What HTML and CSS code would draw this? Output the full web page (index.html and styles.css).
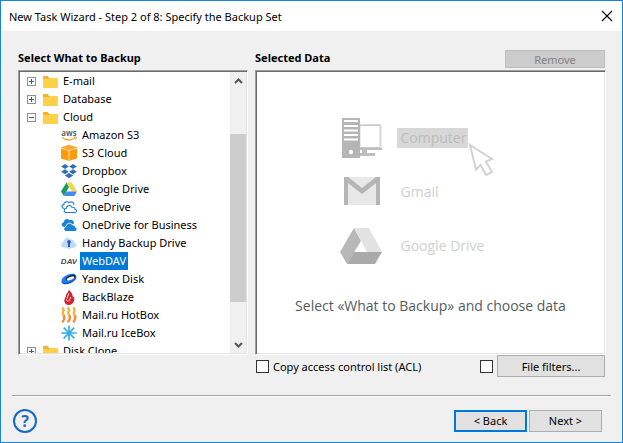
FILE: index.html
```html
<!DOCTYPE html>
<html lang="en">
  <head>
    <meta charset="UTF-8" />
    <meta name="viewport" content="width=device-width, initial-scale=1.0" />
    <title>New Task Wizard</title>
    <link rel="stylesheet" href="styles.css">
  </head>
  <body>
    <div class="window">
      <header class="title-bar">
        <h1>New Task Wizard - Step 2 of 8: Specify the Backup Set</h1>
        <button type="button" class="close-btn" aria-label="Close">
          <svg width="12" height="12" viewBox="0 0 12 12"><path d="M1 1l10 10M11 1L1 11" stroke="#000" stroke-width="1.1" fill="none"/></svg>
        </button>
      </header>

      <main class="content">
        <section class="column">
          <div class="column-header">
            <h2>Select What to Backup</h2>
          </div>
          <div class="panel source-panel">
            <ul class="tree">
              <li class="node">
                <button type="button" class="toggle closed" aria-label="Expand E-mail"></button>
                <svg class="folder" viewBox="0 0 15 13"><path d="M0 1h5l1 2h9v10H0z" fill="#ffb02e"/><path d="M0 4h6l1-1h8v10H0z" fill="#ffd04a"/></svg>
                <span class="label">E-mail</span>
              </li>
              <li class="node">
                <button type="button" class="toggle closed" aria-label="Expand Database"></button>
                <svg class="folder" viewBox="0 0 15 13"><path d="M0 1h5l1 2h9v10H0z" fill="#ffb02e"/><path d="M0 4h6l1-1h8v10H0z" fill="#ffd04a"/></svg>
                <span class="label">Database</span>
              </li>
              <li class="node">
                <button type="button" class="toggle" aria-label="Collapse Cloud"></button>
                <svg class="folder" viewBox="0 0 15 13"><path d="M0 1h5l1 2h9v10H0z" fill="#ffb02e"/><path d="M0 4h6l1-1h8v10H0z" fill="#ffd04a"/></svg>
                <span class="label">Cloud</span>
              </li>
              <li>
                <ul class="branch">
                  <li class="node">
                    <svg class="icon" viewBox="0 0 16 16">
                      <text x="8" y="9" class="aws-text">aws</text>
                      <path d="M1 10.500c4 3 9 3 13 .5" stroke="#f5a030" stroke-width="1.300" fill="none"/>
                      <path d="M12.500 10h3l-1 2.500" stroke="#f5a030" fill="none"/>
                    </svg>
                    <span class="label">Amazon S3</span>
                  </li>
                  <li class="node">
                    <svg class="icon" viewBox="0 0 16 16">
                      <path d="M8 0l8 2.500v11L8 16l-8-2.500v-11z" fill="#ff9a0a"/>
                      <path d="M0 2.500L8 0l8 2.500L8 5z" fill="#ffa726"/>
                      <path d="M0 3.200l8 2.300 8-2.300M8 5.500V16" stroke="#fff0d8" stroke-width=".8" fill="none"/>
                    </svg>
                    <span class="label">S3 Cloud</span>
                  </li>
                  <li class="node">
                    <svg class="icon" viewBox="0 0 16 16">
                      <path d="M4 1l3.800 2.500L4 6 .2 3.500zM12 1l3.800 2.500L12 6 8.200 3.500zM4 6.300l3.800 2.500L4 11.300.2 8.800zM12 6.300l3.800 2.500-3.800 2.500-3.800-2.500zM8 10l4.200 2.600L8 15.200l-4.200-2.600z" fill="#2e6fb8"/>
                    </svg>
                    <span class="label">Dropbox</span>
                  </li>
                  <li class="node">
                    <svg class="icon" viewBox="0 0 16 16">
                      <path d="M5.500 1.500L8 6 2.800 15 0 10.500z" fill="#11a05c"/>
                      <path d="M5.500 1.500h5L16 10.500h-5z" fill="#ffcf44"/>
                      <path d="M5.300 10.500H16L13.300 15H2.800z" fill="#4688f4"/>
                    </svg>
                    <span class="label">Google Drive</span>
                  </li>
                  <li class="node">
                    <svg class="icon" viewBox="0 0 16 16">
                      <path d="M3.500 9.500C.5 9.500 0 6 2.700 5.600 3 2.800 6 1.800 8 3.700c2-1.800 5-.6 5 2.300" fill="none" stroke="#1b82d6" stroke-width="1.100"/>
                      <path d="M5.500 13.500c-3 0-3-4-.3-4.300C5.700 6.300 9.600 5.500 11 8.300c2-.4 3 .6 2.900 2 2.200.2 2 3.200 0 3.200z" fill="#fff" stroke="#1b82d6" stroke-width="1.100"/>
                    </svg>
                    <span class="label">OneDrive</span>
                  </li>
                  <li class="node">
                    <svg class="icon" viewBox="0 0 16 16">
                      <path d="M3 10C0 9.500 0 6 2.500 5.600 3 2 6.500 1 8.500 3.200c2-1 4.500.3 4.500 3.300L9 9z" fill="#1b82d6"/>
                      <path d="M5.500 14.500c-3.500 0-3.500-4.500-.5-5C5.500 6 9.800 5 11.500 8c2-.3 3 .7 2.900 2.200 2.300.5 2 4.300-.4 4.300z" fill="#1b82d6" stroke="#fff" stroke-width=".9"/>
                    </svg>
                    <span class="label">OneDrive for Business</span>
                  </li>
                  <li class="node">
                    <svg class="icon" viewBox="0 0 16 16">
                      <path d="M4 12.500C-.5 13-1 7.500 2.600 7 3 2.500 7.500 1.500 9.500 4.500c2.500-.3 3.700 1 3.500 3 3.500.5 3 5-.3 5L8 14z" fill="#b9dcfb"/>
                      <path d="M8 5a2 2 0 0 1 1 3.600V12H7V8.600A2 2 0 0 1 8 5z" fill="#3b4fb5"/>
                    </svg>
                    <span class="label">Handy Backup Drive</span>
                  </li>
                  <li class="node selected">
                    <svg class="icon" viewBox="0 0 16 16"><text x="8" y="11" class="dav-text">DAV</text></svg>
                    <span class="label">WebDAV</span>
                  </li>
                  <li class="node">
                    <svg class="icon" viewBox="0 0 16 16">
                      <ellipse cx="8" cy="8.600" rx="7.800" ry="3.900" transform="rotate(-22 8 8.600)" fill="#0b4fb0"/>
                      <ellipse cx="8" cy="7.300" rx="7.800" ry="3.900" transform="rotate(-22 8 7.300)" fill="#1a7cf2"/>
                      <ellipse cx="9.500" cy="6.800" rx="5" ry="2.300" transform="rotate(-22 9.500 6.800)" fill="#111"/>
                      <ellipse cx="9.500" cy="7.500" rx="4" ry="1.500" transform="rotate(-22 9.500 7.500)" fill="#f2f8ff"/>
                    </svg>
                    <span class="label">Yandex Disk</span>
                  </li>
                  <li class="node">
                    <svg class="icon" viewBox="0 0 16 16">
                      <path d="M8 0c.3 2.500 4 3.700 3.500 7.300C13.300 8 13.700 10 13 12c-.9 2.500-3 4-5.200 4C5 16 3.200 14 3.300 11.500c0-2 1.500-3 1.700-5C5.200 4.200 8 3 8 0z" fill="#d9202e"/>
                      <path d="M7.500 4.500c.5 2-1.800 3-1.300 5M9.500 8c.5 1.800-1.700 2.500-1.500 4.500M5.500 10.500c0 1 .7 1.700 1.500 1.800" stroke="#fff" stroke-width=".9" fill="none"/>
                    </svg>
                    <span class="label">BackBlaze</span>
                  </li>
                  <li class="node">
                    <svg class="icon" viewBox="0 0 16 16" fill="none" stroke-width="2.400">
                      <path d="M1 .5c4 2.500-1 4.500 1.500 7.500M6.500 .5c4 2.500-1 4.500 1.500 7.500M12 .5c4 2.500-1 4.500 1.500 7.500" stroke="#fbb03b"/>
                      <path d="M2.500 8c2.300 3-.2 5-1 7.500M8 8c2.300 3-.2 5-1 7.500M13.500 8c2.300 3-.2 5-1 7.500" stroke="#f98a33"/>
                    </svg>
                    <span class="label">Mail.ru HotBox</span>
                  </li>
                  <li class="node">
                    <svg class="icon" viewBox="0 0 16 16" fill="none" stroke="#35aee8" stroke-width="1.700">
                      <path d="M8 .5v15M.3 8h15.400M2.700 2.700l10.600 10.600M13.300 2.700L2.700 13.300"/>
                      <circle cx="8" cy="8" r="1.500" fill="#35aee8"/>
                    </svg>
                    <span class="label">Mail.ru IceBox</span>
                  </li>
                </ul>
              </li>
              <li class="node">
                <button type="button" class="toggle closed" aria-label="Expand Disk Clone"></button>
                <svg class="folder" viewBox="0 0 15 13"><path d="M0 1h5l1 2h9v10H0z" fill="#ffb02e"/><path d="M0 4h6l1-1h8v10H0z" fill="#ffd04a"/></svg>
                <span class="label">Disk Clone</span>
              </li>
            </ul>
            <div class="scrollbar">
              <button type="button" class="scroll-btn" aria-label="Scroll up">
                <svg width="9" height="6" viewBox="0 0 9 6"><path d="M1 5l3.500-3.500L8 5" stroke="#555" stroke-width="2" fill="none"/></svg>
              </button>
              <div class="track">
                <div class="thumb"></div>
              </div>
              <button type="button" class="scroll-btn" aria-label="Scroll down">
                <svg width="9" height="6" viewBox="0 0 9 6"><path d="M1 1l3.500 3.500L8 1" stroke="#555" stroke-width="2" fill="none"/></svg>
              </button>
            </div>
          </div>
        </section>

        <section class="column">
          <div class="column-header">
            <h2>Selected Data</h2>
            <button type="button" class="btn remove-btn" disabled>Remove</button>
          </div>
          <div class="panel data-panel">
            <ul class="hints">
              <li>
                <svg width="44" height="40" viewBox="0 0 44 40">
                  <path d="M20 6.500h21v24H20z" fill="#fff" stroke="#dadada"/>
                  <path d="M20 7.500h20v22H20" fill="none" stroke="#c9c9c9"/>
                  <path d="M20 30h22v2H20zM22 32h5v3h8v3H20v-3h2z" fill="#bdbdbd"/>
                  <path d="M2 0h18v40H2z" fill="#b5b5b5"/>
                  <path d="M4 3h14M4 8h14M4 12.500h14M4 17h14M4 21.500h14" stroke="#fff" stroke-width="2"/>
                  <circle cx="11" cy="34" r="2.200" fill="#fff"/>
                </svg>
                <span class="hint-label active">Computer
                  <svg class="pointer" width="27" height="34" viewBox="0 0 27 34"><path d="M2 2l22 14-6 2.500L24 29l-6 3-5.500-10L8 26.500z" fill="#fff" stroke="#d2d2d2" stroke-width="2"/></svg>
                </span>
              </li>
              <li>
                <svg width="44" height="40" viewBox="0 0 44 40">
                  <path d="M4 5h36v28H4z" fill="#e8e8e8"/>
                  <path d="M4 5h4l14 11L36 5h4v28h-4V11L22 22 8 11v22H4z" fill="#b5b5b5"/>
                </svg>
                <span class="hint-label">Gmail</span>
              </li>
              <li>
                <svg width="44" height="40" viewBox="0 0 44 40">
                  <path d="M14 2l7 13L7 38 0 26z" fill="#b8b8b8"/>
                  <path d="M14 2h15l13 24H27z" fill="#e2e2e2"/>
                  <path d="M14 26h28l-7 12H7z" fill="#aaa"/>
                </svg>
                <span class="hint-label">Google Drive</span>
              </li>
            </ul>
            <p class="hint-message">Select «What to Backup» and choose data</p>
          </div>
        </section>

        <div class="options">
          <label class="check"><input type="checkbox"> Copy access control list (ACL)</label>
          <div class="filters">
            <input type="checkbox" aria-label="Use file filters">
            <button type="button" class="btn filter-btn">File filters...</button>
          </div>
        </div>
      </main>

      <footer class="footer">
        <a href="#" class="help" aria-label="Help">?</a>
        <div class="nav">
          <button type="button" class="btn nav-btn primary">&lt; Back</button>
          <button type="button" class="btn nav-btn">Next &gt;</button>
        </div>
      </footer>
    </div>
  </body>
</html>
```
FILE: styles.css
```css
:root {
  --accent: #0078d7;
  --frame: #1883d7;
  --face: #f0f0f0;
  --button: #e1e1e1;
  --button-border: #adadad;
}

* {
  margin: 0;
  padding: 0;
  box-sizing: border-box;
}

body {
  font-family: "Noto Sans", "Open Sans", sans-serif;
  font-size: 11px;
  color: #000;
}

ul {
  list-style: none;
}

button {
  font: inherit;
  color: inherit;
}

.window {
  display: flex;
  flex-direction: column;
  height: 100vh;
  border: 1px solid var(--frame);
  background-color: var(--face);
}

/* Title bar */
.title-bar {
  display: flex;
  justify-content: space-between;
  align-items: center;
  height: 30px;
  padding: 0 9px 0 8px;
  background-color: #fff;
}

.title-bar h1 {
  font-size: 11px;
  font-weight: normal;
}

.close-btn {
  display: flex;
  border: none;
  background: none;
}

/* Two columns with the options under the right one */
.content {
  flex: 1;
  min-height: 0;
  display: grid;
  grid-template-columns: 230fr 351fr;
  grid-template-rows: minmax(0, 1fr) auto;
  column-gap: 7px;
  padding: 19px 16px 18px 17px;
}

.column {
  display: flex;
  flex-direction: column;
  min-height: 0;
}

.column-header {
  display: flex;
  justify-content: space-between;
  align-items: flex-start;
  height: 20px;
}

.column-header h2 {
  font-size: 11px;
  line-height: 15px;
}

/* Sunken edge: outer line, then a darker inner line */
.panel {
  flex: 1;
  min-height: 0;
  border: 1px solid;
  border-color: #a0a0a0 #fff #fff #a0a0a0;
  padding: 1px;
  background-color: #fff;
  box-shadow: inset 1px 1px 0 #696969, inset -1px -1px 0 #e3e3e3;
}

.btn {
  height: 22px;
  border: 1px solid var(--button-border);
  background-color: var(--button);
  text-align: center;
}

.remove-btn {
  width: 100px;
  height: 18px;
  margin-right: 1px;
  border-color: #bfbfbf;
  background-color: #ccc;
  color: #838383;
}

/* Tree */
.source-panel {
  display: flex;
}

.tree {
  flex: 1;
  overflow: hidden;
  padding-left: 7px;
}

.node {
  display: flex;
  align-items: center;
  height: 18px;
}

.toggle {
  width: 9px;
  height: 9px;
  margin-right: 7px;
  border: 1px solid #919191;
  background: linear-gradient(#3a5ba8, #3a5ba8) center / 5px 1px no-repeat, #fafafa;
}

.toggle.closed {
  background: linear-gradient(#3a5ba8, #3a5ba8) center / 5px 1px no-repeat,
    linear-gradient(#3a5ba8, #3a5ba8) center / 1px 5px no-repeat, #fafafa;
}

.folder {
  width: 15px;
  height: 13px;
  margin-right: 3px;
}

.branch {
  padding-left: 34px;
}

.icon {
  width: 16px;
  height: 16px;
  margin-right: 3px;
}

.label {
  padding: 0 2px;
  line-height: 18px;
  white-space: nowrap;
}

.selected .label {
  background-color: var(--accent);
  color: #fff;
}

.aws-text {
  font-size: 8px;
  font-weight: 600;
  fill: #4a5563;
  text-anchor: middle;
}

.dav-text {
  font-family: "Liberation Sans", sans-serif;
  font-size: 8px;
  font-weight: bold;
  font-style: italic;
  fill: #444c52;
  text-anchor: middle;
}

.scrollbar {
  display: flex;
  flex-direction: column;
  width: 16px;
  background-color: var(--face);
}

.scroll-btn {
  display: flex;
  justify-content: center;
  align-items: center;
  height: 17px;
  border: none;
  background: none;
}

.track {
  flex: 1;
  display: flex;
  flex-direction: column;
  justify-content: flex-end;
  padding-bottom: 34px;
}

.thumb {
  height: 79%;
  background-color: #cdcdcd;
}

/* Empty state of the right panel */
.data-panel {
  display: flex;
  flex-direction: column;
  align-items: center;
  padding-top: 47px;
  font-family: "Open Sans", "Noto Sans", sans-serif;
}

.hints {
  display: flex;
  flex-direction: column;
  gap: 14px;
  width: 182px;
}

.hints li {
  display: flex;
  align-items: center;
  gap: 13px;
}

.hint-label {
  position: relative;
  padding: 0 2px 0 4px;
  font-size: 14px;
  line-height: 20px;
  color: #d0d0d0;
}

.hint-label.active {
  background-color: #d8d8d8;
  color: #bcbcbc;
}

.pointer {
  position: absolute;
  left: 71px;
  top: 15px;
}

.hint-message {
  margin-top: 28px;
  font-size: 14px;
  line-height: 24px;
  color: #555c60;
}

/* Options */
.options {
  grid-column: 2;
  display: flex;
  justify-content: space-between;
  align-items: center;
  padding: 0 1px;
}

input[type="checkbox"] {
  appearance: none;
  width: 13px;
  height: 13px;
  border: 1px solid #333;
  background-color: #fff;
}

.check,
.filters {
  display: flex;
  align-items: center;
  gap: 4px;
}

.filter-btn {
  width: 108px;
}

/* Footer */
.footer {
  display: flex;
  justify-content: space-between;
  align-items: center;
  height: 47px;
  margin: 0 11px;
  padding: 3px 9px 0 1px;
  border-top: 1px solid #a0a0a0;
  box-shadow: inset 0 1px 0 #fff;
}

.help {
  width: 24px;
  height: 24px;
  border: 2px solid #1269c7;
  border-radius: 50%;
  font-size: 16px;
  font-weight: bold;
  line-height: 20px;
  text-align: center;
  text-decoration: none;
  color: #1c6fb8;
}

.nav {
  display: flex;
  gap: 2px;
}

.nav-btn {
  width: 73px;
}

.nav-btn.primary {
  border: 2px solid var(--accent);
}
```
